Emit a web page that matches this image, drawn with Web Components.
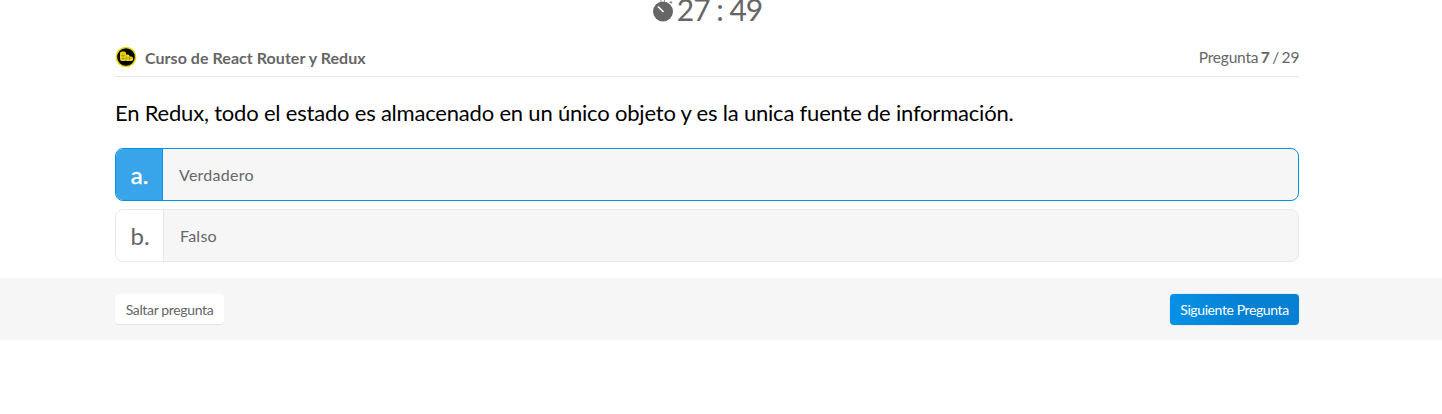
<!DOCTYPE html>
<html lang="es">
<head>
<meta charset="utf-8">
<title>Examen</title>
<style>
html,body{margin:0;height:414px;overflow:hidden;background:#fff}
body{font-family:Lato,sans-serif;font-size:16px;color:#666}
</style>
</head>
<body>
<quiz-page></quiz-page>
<script>
function define(name, html){
  customElements.define(name, class extends HTMLElement{
    constructor(){ super(); this.attachShadow({mode:'open'}).innerHTML = html; }
  });
}
define('quiz-timer', `
<style>
:host{display:flex;justify-content:center;align-items:flex-start;height:41px;color:#666}
svg{display:block;flex:none;width:22px;height:22px;margin-right:3px}
span{font-size:30px;line-height:18px;white-space:nowrap;letter-spacing:-1px;margin-right:0}
</style>
<svg viewBox="0 0 22 22"><path d="M8.500 0h1v2h-1zM12 0h1v2h-1z" fill="#999"/><path d="M17 2.200l2-1.200 1.500 1.500-1.400 1.200z" fill="#888"/><circle cx="11" cy="11.500" r="10" fill="#666"/><path d="M6 6.500l5.500 5.500" stroke="#fff" stroke-width="1.700" fill="none"/></svg>
<span><slot></slot></span>`);
define('course-badge', `
<style>:host{display:block;width:22px;height:22px}svg{display:block}</style>
<svg width="22" height="22" viewBox="0 0 22 22"><circle cx="11" cy="11" r="9.600" fill="#000" stroke="#e8d60c" stroke-width="1.500"/>
<g fill="#f2dc18"><rect x="5" y="5.500" width="6" height="9.500" rx="2"/><rect x="10" y="8.500" width="4.500" height="6.500" rx="1.500"/><rect x="12.500" y="10.500" width="5.500" height="4.500" rx="1.800"/></g>
<path d="M5.500 9.700h5M5.500 12.500h5M8 6.500v8M11.300 10v4.500M11.500 12.200h5.500M14.300 11v3.500" stroke="#806f00" stroke-width=".5" fill="none"/></svg>`);
define('quiz-header', `
<style>
:host{display:flex;align-items:center;height:35px;border-bottom:1px solid #e8e8e8;box-sizing:content-box}
course-badge{margin-bottom:3px}
.name{font-weight:700;font-size:16px;margin-left:8px;flex:1;letter-spacing:.05px;padding-bottom:2px}
.count{font-size:15.500px;letter-spacing:-.2px;word-spacing:-1.200px;padding-bottom:3px;margin-right:-.2px}
</style>
<course-badge></course-badge><div class="name"><slot></slot></div><div class="count"><slot name="count"></slot></div>`);
define('quiz-option', `
<style>
:host{display:flex;box-sizing:border-box;height:53px;border:1px solid #e8e8e8;border-radius:8px;background:#f6f6f6;overflow:hidden;margin-bottom:8px}
.letter{width:47px;display:flex;align-items:center;justify-content:center;background:#fff;border-right:1px solid #e8e8e8;font-size:24px;box-sizing:content-box}
.letter slot{display:block;padding-left:1px}
.text{display:flex;align-items:center;padding-left:16px;font-size:16px;letter-spacing:.25px}
:host([selected]){border-color:#0791e6}
:host([selected]) .letter{width:46px;background:#38a5eb;color:#fff;border-color:#0791e6;-webkit-text-stroke:.4px #fff}
</style>
<div class="letter"><slot name="letter"></slot></div><div class="text"><slot></slot></div>`);
define('quiz-button', `
<style>
:host{display:flex;align-items:center;justify-content:center;box-sizing:border-box;width:109px;height:30px;border-radius:4px;background:#fff;box-shadow:0 1px 1px rgba(0,0,0,.07);font-size:14px;letter-spacing:-.35px;white-space:nowrap;padding-top:1px}
:host([primary]){width:129px;height:31px;background:linear-gradient(90deg,#0791e6,#0580d3 60%);color:#fff;box-shadow:0 0 1px rgba(5,128,211,.6);letter-spacing:-.4px;padding-top:0}
</style><slot></slot>`);
define('quiz-page', `
<style>
:host{display:block}
.inner{padding:0 143px 0 115px}
h1{margin:0;padding-top:17px;height:54px;font-weight:400;font-size:22px;line-height:38px;letter-spacing:-.2px;color:#000;white-space:nowrap}
footer{display:flex;justify-content:space-between;align-items:flex-start;box-sizing:border-box;height:62px;padding:16px 143px 0 115px;background:#f6f6f6;margin-top:8px}
main{display:flow-root}
</style>
<main class="inner">
<quiz-timer>27 : 49</quiz-timer>
<quiz-header>Curso de React Router y Redux<span slot="count">Pregunta <b>7</b> / 29</span></quiz-header>
<h1>En Redux, todo el estado es almacenado en un único objeto y es la unica fuente de información.</h1>
<quiz-option selected><span slot="letter">a.</span>Verdadero</quiz-option>
<quiz-option><span slot="letter">b.</span>Falso</quiz-option>
</main>
<footer><quiz-button>Saltar pregunta</quiz-button><quiz-button primary>Siguiente Pregunta</quiz-button></footer>`);
</script>
</body>
</html>
